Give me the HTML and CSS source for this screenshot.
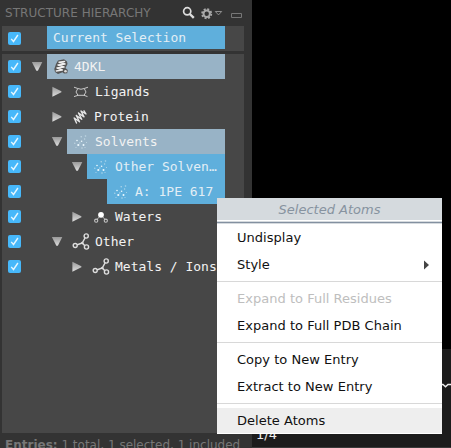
FILE: index.html
```
<!DOCTYPE html>
<html lang="en">
<head>
<meta charset="utf-8">
<title>Structure Hierarchy</title>
<link rel="stylesheet" href="styles.css">
</head>
<body>
<svg class="defs" width="0" height="0">
  <symbol id="check" viewBox="0 0 13 13"><path d="M3.2 6.9 5.5 9.5 9.9 3" fill="none" stroke="#e4f6ff" stroke-width="1.4"/></symbol>
  <linearGradient id="metal" x1="0" y1="0" x2="0" y2="1"><stop offset="0" stop-color="#999"/><stop offset="1" stop-color="#ddd"/></linearGradient>
  <symbol id="down" viewBox="0 0 12 12"><path d="M.9 1h10.4L6.9 9.8H5.3z" fill="url(#metal)"/></symbol>
  <symbol id="right" viewBox="0 0 12 12"><path d="M1.4 .7 10.4 5.2v1L1.4 10.7z" fill="url(#metal)"/></symbol>
  <symbol id="entry" viewBox="0 0 16 16"><path d="M5 1.5 11 .3 14 2.5 14.5 5 12.5 9l2.3 2-.6 3.2-3.2.3-1.5-1.3L5 15 2 13 1.3 10 3 5z" fill="#555"/><path d="M6 3.2 11.5 2.5M5 6l7-1M4 9l7-1M3.3 12l6-1M6 3.2 12 5M5 6l6 2M4 9l5.3 2" stroke="#eee" stroke-width="1.5" stroke-linecap="round"/><circle cx="12.5" cy="12.3" r="1.3" fill="#ddd"/></symbol>
  <symbol id="ligand" viewBox="0 0 16 16"><path d="M4.8 4.5Q8 6 11.2 4.5L13 8l-2 3.3H5L3 8zM4.8 4.5 1 3.2M11.2 4.5 15 3.2M5 11.3 1 12.6M11 11.3l3.5 1.3" fill="none" stroke="#c8c8c8" stroke-width="1"/></symbol>
  <symbol id="protein" viewBox="0 0 16 16"><path d="M9 2 14 5M6.5 4 12 7.8M4.3 6.5 9.7 10.3M2.2 9 7.5 12.8M9 2 12 7.8M6.5 4 9.7 10.3M4.3 6.5 7.5 12.8M2.2 9 4.5 14M12 1.8l2 3.2" fill="none" stroke="#e6e6e6" stroke-width="1.4" stroke-linecap="round"/></symbol>
  <symbol id="solvent" viewBox="0 0 16 16"><g fill="#eefaff"><circle cx="5.3" cy="11" r="1.1"/><circle cx="10.5" cy="11" r="1"/><circle cx="4" cy="6.5" r=".8"/><circle cx="8.6" cy="7.2" r=".8"/></g><g fill="#d9e9f2" fill-opacity=".65"><circle cx="8.2" cy="2.8" r=".8"/><circle cx="12.5" cy="2" r=".8"/><circle cx="11.6" cy="5" r=".7"/><circle cx="1.8" cy="9.3" r=".7"/><circle cx="6.8" cy="9" r=".7"/><circle cx="13.5" cy="8.5" r=".6"/><circle cx="9" cy="14" r=".8"/><circle cx="3" cy="13.5" r=".6"/><circle cx="12" cy="13.5" r=".6"/></g></symbol>
  <symbol id="water" viewBox="0 0 16 16"><path d="M8 6 3.5 11M8 6l4.5 5" stroke="#bbb"/><circle cx="8" cy="5.8" r="2.9" fill="#fff"/><g fill="#474747" stroke="#c4c4c4" stroke-width="1.1"><circle cx="3.2" cy="11.7" r="1.6"/><circle cx="12.8" cy="11.7" r="1.6"/></g></symbol>
  <symbol id="metals" viewBox="0 0 18 18"><path d="M4 12.3 10.3 10 13.5 4M10.3 10 14 14" fill="none" stroke="#ddd" stroke-width="1.5"/><g fill="#474747" stroke="#ddd" stroke-width="1.4"><circle cx="3.2" cy="12.5" r="2"/><circle cx="14.2" cy="3" r="2.1"/><circle cx="14.5" cy="14" r="2.1"/></g><circle cx="10.3" cy="10" r="1.3" fill="#ddd"/></symbol>
</svg>
<main class="window">
  <aside class="panel">
    <header class="title">
      <span class="title-text">STRUCTURE HIERARCHY</span>
      <svg class="tools" width="64" height="18" viewBox="0 0 64 18">
        <circle cx="7.2" cy="6.3" r="3.6" fill="none" stroke="#ddd" stroke-width="1.7"/><path d="m9.8 9 4 3.9" stroke="#ddd" stroke-width="2.4"/>
        <circle cx="26.7" cy="8.7" r="4.6" fill="none" stroke="#aaa" stroke-width="1.8" stroke-dasharray="2 1.61"/><circle cx="26.7" cy="8.7" r="3.2" fill="none" stroke="#aaa" stroke-width="2"/>
        <path d="M35.3 6.5h6.4L38.5 9.9z" fill="#333" stroke="#999" stroke-width=".9"/>
        <path d="M51.5 8.5h10v4h-10z" fill="none" stroke="#777"/>
      </svg>
    </header>
    <section class="current row"><svg class="check"><use href="#check"/></svg><div class="label blue">Current Selection</div></section>
    <section class="tree">
      <div class="row l0"><svg class="check"><use href="#check"/></svg><svg class="arrow"><use href="#down"/></svg><div class="label steel entry"><svg class="icon"><use href="#entry"/></svg>4DKL</div></div>
      <div class="row l1"><svg class="check"><use href="#check"/></svg><svg class="arrow"><use href="#right"/></svg><div class="label"><svg class="icon"><use href="#ligand"/></svg>Ligands</div></div>
      <div class="row l1"><svg class="check"><use href="#check"/></svg><svg class="arrow"><use href="#right"/></svg><div class="label protein"><svg class="icon"><use href="#protein"/></svg>Protein</div></div>
      <div class="row l1"><svg class="check"><use href="#check"/></svg><svg class="arrow"><use href="#down"/></svg><div class="label steel"><svg class="icon"><use href="#solvent"/></svg>Solvents</div></div>
      <div class="row l2"><svg class="check"><use href="#check"/></svg><svg class="arrow"><use href="#down"/></svg><div class="label blue"><svg class="icon"><use href="#solvent"/></svg>Other Solven…</div></div>
      <div class="row l3"><svg class="check"><use href="#check"/></svg><svg class="arrow"></svg><div class="label blue"><svg class="icon"><use href="#solvent"/></svg>A: 1PE 617</div></div>
      <div class="row l2"><svg class="check"><use href="#check"/></svg><svg class="arrow"><use href="#right"/></svg><div class="label"><svg class="icon"><use href="#water"/></svg>Waters</div></div>
      <div class="row l1"><svg class="check"><use href="#check"/></svg><svg class="arrow"><use href="#down"/></svg><div class="label"><svg class="icon wide"><use href="#metals"/></svg>Other</div></div>
      <div class="row l2"><svg class="check"><use href="#check"/></svg><svg class="arrow"><use href="#right"/></svg><div class="label"><svg class="icon wide"><use href="#metals"/></svg>Metals / Ions</div></div>
    </section>
    <footer class="status"><b>Entries:</b> 1 total, 1 selected, 1 included</footer>
  </aside>
  <section class="viewer">
    <div class="strip"><span class="count">1/4</span><svg class="squiggle" width="10" height="6" viewBox="0 0 10 6"><path d="M0 1.5 2 1.5 4.5 3.7 7 1.5H10" fill="none" stroke="#eee" stroke-width="1.5"/></svg></div>
  </section>
</main>
<nav class="menu">
  <div class="menu-title">Selected Atoms</div>
  <div class="item">Undisplay</div>
  <div class="item">Style<svg class="more" width="5" height="10" viewBox="0 0 5 10"><path d="M0 .5 5 5 0 9.5z" fill="#444"/></svg></div>
  <hr>
  <div class="item disabled">Expand to Full Residues</div>
  <div class="item">Expand to Full PDB Chain</div>
  <hr>
  <div class="item">Copy to New Entry</div>
  <div class="item">Extract to New Entry</div>
  <hr>
  <div class="item hover">Delete Atoms</div>
</nav>
</body>
</html>
```

FILE: styles.css
```
* { box-sizing: border-box; }
body { margin: 0; width: 451px; height: 448px; overflow: hidden; background: #000; font: 13px "DejaVu Sans", sans-serif; }
svg { flex: none; }
.defs { position: absolute; }
.window { display: flex; height: 448px; overflow: hidden; }
.panel { flex: none; width: 252px; height: 448px; padding-left: 2px; overflow: hidden; background: #333; }
.title { display: flex; align-items: center; height: 26px; padding-left: 3px; }
.title-text { width: 175px; color: #777; font-size: 12px; letter-spacing: 0.04px; white-space: nowrap; }
.tools { display: block; margin-top: 1px; }
.row { display: flex; align-items: center; width: 242px; height: 25px; }
.check { width: 13px; height: 13px; margin-left: 6px; border-radius: 2px; background: #47b8fa; }
.tree { width: 242px; height: 379px; background: #474747; }
.arrow { width: 12px; height: 12px; margin: 0 4px 0 10px; }
.l1 .arrow { margin-left: 30px; }
.l2 .arrow { margin-left: 50px; }
.l3 .arrow { margin-left: 70px; }
.label { display: flex; flex: 1; align-items: center; height: 25px; margin-right: 19px; padding-left: 6px; color: #f2f2f2; font: 13px "DejaVu Sans Mono", monospace; white-space: pre; }
.tree .label:not(.steel):not(.blue) { margin-right: 0; }
.icon { width: 16px; height: 16px; margin-right: 6px; }
.icon.wide { width: 18px; height: 18px; margin: 0 5px 0 -1px; }
.protein .icon { margin: 0 6px 0 -1px; }
.entry .icon { margin-right: 5px; }
.steel { background: #98b3c6; }
.blue { background: #5fafdc; color: #e2eef5; }
.current { margin-bottom: 3px; background: #474747; }
.current .label { height: 23px; margin: 0 19px 2px 26px; }
.status { padding: 4px 0 0 3px; color: #777; font-size: 12px; line-height: 16px; white-space: nowrap; }
.viewer { display: flex; flex: 1; align-items: flex-end; background: #000; }
.strip { display: flex; justify-content: space-between; width: 100%; height: 99px; border-bottom: 1px solid #3a3a3a; background: #1c1c1c; color: #eee; }
.count { padding: 78px 0 0 4px; line-height: 16px; }
.squiggle { margin-top: 34px; }
.menu { position: absolute; top: 198px; left: 217px; width: 225px; height: 236px; background: #fff; color: #111; }
.menu-title { height: 26px; border-bottom: 1px solid #d5dade; background: linear-gradient(#d5dade 22px, #fff 22px, #fff 23px, #d5dade 23px, #d5dade 24px, #8390a0 24px); color: #8793a0; font-style: italic; line-height: 23px; text-align: center; }
.item { display: flex; align-items: center; justify-content: space-between; height: 27px; padding: 0 13px 0 20px; letter-spacing: 0.02px; }
.menu hr { height: 7px; margin: 0; border: 0; background: linear-gradient(#fff 3px, #d8d8d8 3px, #d8d8d8 4px, #fff 4px); }
.disabled { color: #bebebe; }
.hover { height: 25px; margin-top: 1px; background: #eee; }
```
